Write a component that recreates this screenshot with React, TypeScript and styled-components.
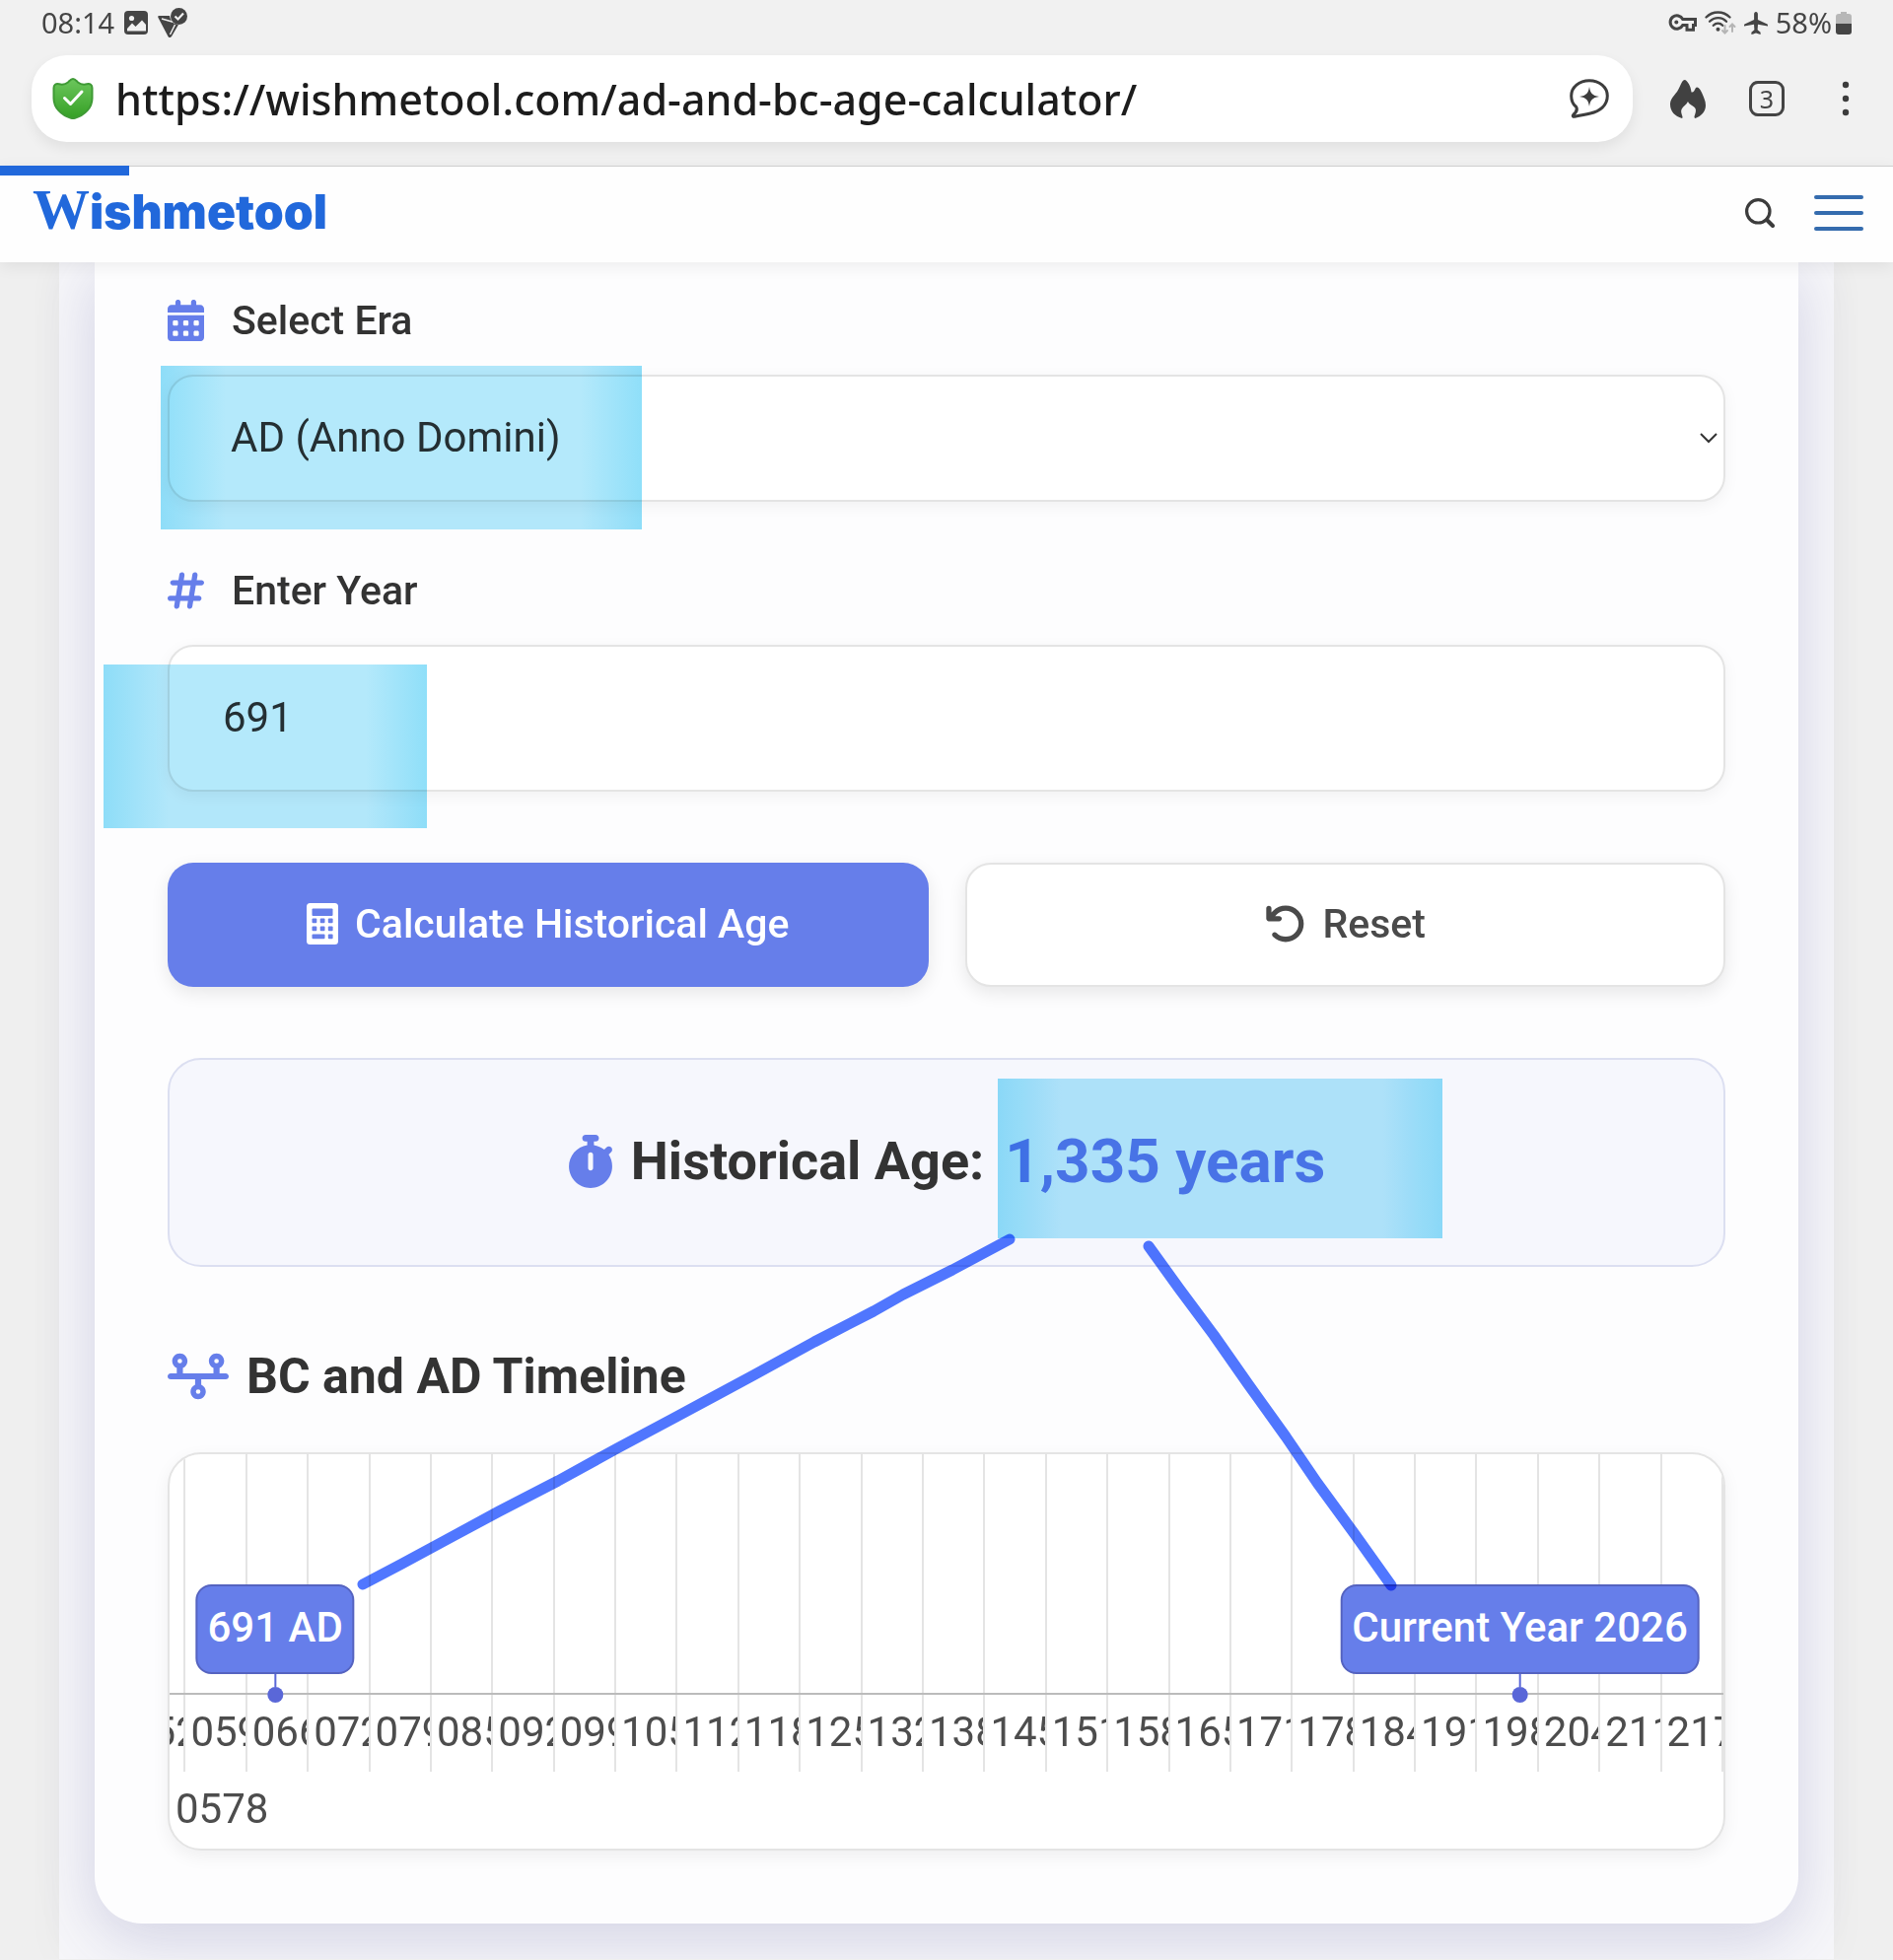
import React, { useState } from 'react';
import styled, { createGlobalStyle } from 'styled-components';
import {
  FaArrowRotateLeft,
  FaCalendarDays,
  FaHashtag,
  FaStopwatch,
  FaTimeline,
} from 'react-icons/fa6';

const GlobalStyle = createGlobalStyle`
  *, *::before, *::after { box-sizing: border-box; }
  body {
    margin: 0;
    background: #efefef;
    color: #333;
    font-family: Roboto, "Liberation Sans", sans-serif;
    font-size: 42px;
    line-height: 50px;
  }
  button, input, select { font: inherit; color: inherit; margin: 0; }
  h2, p { margin: 0; }
`;

const accent = '#667eea';
const accentDark = '#5a67d8';
const hairline = '#e4e4e4';

const Browser = styled.header`
  background: #f1f1f1;
  padding-bottom: 24px;
  font-family: "Noto Sans", sans-serif;
  color: #454545;
`;

const StatusBar = styled.div`
  display: flex;
  align-items: center;
  justify-content: space-between;
  height: 46px;
  padding: 0 42px;
  margin-bottom: 10px;
  font-size: 29px;
  line-height: 46px;
`;

const StatusGroup = styled.div<{ $gap: number }>`
  display: flex;
  align-items: center;
  gap: ${(p) => p.$gap}px;
`;

const Battery = styled.span`
  display: flex;
  align-items: center;
  gap: 4px;
`;

const Toolbar = styled.div`
  display: flex;
  align-items: center;
  gap: 44px;
  padding: 0 30px 0 32px;
`;

const AddressBar = styled.div`
  flex: 1;
  min-width: 0;
  display: flex;
  align-items: center;
  gap: 22px;
  height: 88px;
  margin-right: -6px;
  padding: 0 24px 0 21px;
  border-radius: 36px;
  background: #fff;
  box-shadow: 0 6px 14px rgba(0, 0, 0, 0.07);
`;

const AddressInput = styled.input`
  flex: 1;
  min-width: 0;
  height: 64px;
  padding: 0;
  border: 0;
  outline: 0;
  background: transparent;
  color: #1c1c1c;
  font-size: 43px;
  font-weight: 500;
`;

const IconButton = styled.button`
  display: inline-flex;
  align-items: center;
  justify-content: center;
  flex: none;
  padding: 0;
  border: 0;
  background: none;
  cursor: pointer;
`;

const TabCount = styled(IconButton)`
  width: 36px;
  height: 36px;
  border: 3px solid #444;
  border-radius: 9px;
  font-size: 25px;
  line-height: 30px;
`;

const SiteHeader = styled.div`
  position: relative;
  z-index: 2;
  display: flex;
  align-items: center;
  justify-content: space-between;
  height: 98px;
  padding: 0 30px 3px 33px;
  border-top: 1px solid #cfcfcf;
  background: #fefefe;
  box-shadow: 0 4px 16px rgba(0, 0, 0, 0.07);
`;

const ReadProgress = styled.div`
  position: absolute;
  top: -1px;
  left: 0;
  width: 131px;
  height: 10px;
  background: #2168db;
`;

const Logo = styled.a`
  display: flex;
  align-items: baseline;
  padding-bottom: 4px;
  color: #2168db;
  font-family: Inter, sans-serif;
  font-size: 48px;
  font-weight: 900;
  line-height: 50px;
  text-decoration: none;
`;

const LogoInitial = styled.span`
  font-family: "Liberation Serif", serif;
  font-size: 58px;
  font-weight: 700;
`;

const HeaderActions = styled.div`
  display: flex;
  align-items: center;
  gap: 40px;
`;

const Main = styled.main`
  margin: 0 60px;
  padding: 0 36px 36px;
  background: #f6f6f9;
  box-shadow: 0 0 40px rgba(0, 0, 0, 0.03);
`;

const Card = styled.form`
  position: relative;
  padding: 34px 74px 74px;
  border-radius: 0 0 48px 48px;
  background: #fdfdfe;
  box-shadow: 0 16px 60px rgba(70, 70, 150, 0.2);
`;

const Label = styled.label`
  display: grid;
  grid-template-columns: 65px 1fr;
  align-items: center;
  margin-bottom: 30px;
  font-size: 41px;
  font-weight: 500;

  svg {
    width: 37px;
    height: 42px;
    color: ${accent};
  }
`;

const Field = styled.div<{ $after: number }>`
  position: relative;
  margin-bottom: ${(p) => p.$after}px;
`;

const controlBox = `
  display: block;
  width: 100%;
  border: 2px solid ${hairline};
  border-radius: 26px;
  background: #fff;
  color: #333;
  outline: 0;
  box-shadow: 0 4px 16px rgba(0, 0, 0, 0.05);
`;

const Select = styled.select`
  ${controlBox}
  appearance: none;
  height: 129px;
  padding: 0 62px 2px;
`;

const YearInput = styled.input`
  ${controlBox}
  height: 149px;
  padding: 0 54px 2px;
`;

const Chevron = styled.svg`
  position: absolute;
  top: 58px;
  right: 8px;
  pointer-events: none;
`;

const Highlight = styled.span<{ $top: number; $left: number; $width: number; $height?: number }>`
  position: absolute;
  top: ${(p) => p.$top}px;
  left: ${(p) => p.$left}px;
  width: ${(p) => p.$width}px;
  height: ${(p) => p.$height ?? 166}px;
  background: linear-gradient(90deg, #8fdff9, #b4e9fb 66px, #b4e9fb calc(100% - 62px), #8fdff9);
  mix-blend-mode: multiply;
  pointer-events: none;
`;

const Actions = styled.div`
  display: grid;
  grid-template-columns: 1fr 1fr;
  gap: 37px;
  margin-bottom: 72px;
`;

const ActionButton = styled.button<{ $primary?: boolean }>`
  display: flex;
  align-items: center;
  justify-content: center;
  gap: 17px;
  height: 126px;
  padding: 0 6px 2px;
  border: ${(p) => (p.$primary ? '0' : `2px solid ${hairline}`)};
  border-radius: 26px;
  background: ${(p) => (p.$primary ? accent : '#fff')};
  color: ${(p) => (p.$primary ? '#fff' : '#4a4a4a')};
  font-size: 41px;
  font-weight: 500;
  box-shadow: 0 6px 18px rgba(0, 0, 0, 0.09);
  cursor: pointer;

  svg {
    width: ${(p) => (p.$primary ? 32 : 42)}px;
    height: 42px;
  }
`;

const Result = styled.div`
  display: flex;
  align-items: center;
  justify-content: center;
  gap: 18px;
  height: 212px;
  margin-bottom: 81px;
  padding-bottom: 2px;
  border: 2px solid #dcdff1;
  border-radius: 34px;
  background: #f6f7fd;
  font-size: 54px;
  font-weight: 700;

  > svg {
    width: 46px;
    height: 54px;
    color: ${accent};
  }
`;

const ResultValue = styled.output`
  position: relative;
  margin-left: 3px;
  color: ${accent};
  font-size: 62px;
`;

const SectionTitle = styled.h2`
  display: flex;
  align-items: center;
  gap: 18px;
  margin-bottom: 47px;
  font-size: 50px;
  font-weight: 700;
  line-height: 60px;

  svg {
    flex: none;
    width: 62px;
    height: 50px;
    color: ${accent};
  }
`;

const Timeline = styled.div`
  position: relative;
  overflow: hidden;
  border: 2px solid ${hairline};
  border-radius: 34px;
  background: #fff;
  color: #4d4d4d;
  box-shadow: 0 6px 18px rgba(0, 0, 0, 0.06);
`;

const Ticks = styled.div`
  display: grid;
  grid-template-columns: repeat(26, minmax(0, 1fr));
  height: 322px;
  margin-left: -46px;
`;

const Tick = styled.span`
  padding: 257px 0 0 5px;
  overflow: hidden;
  border-right: 2px solid ${hairline};
  white-space: nowrap;
`;

const Major = styled.p`
  padding: 13px 6px 15px;
`;

const Axis = styled.div`
  position: absolute;
  top: 242px;
  left: 0;
  right: 0;
  height: 2px;
  background: #bbb;
`;

const Pin = styled.div`
  position: absolute;
  top: 132px;
  display: flex;
  flex-direction: column;
  align-items: center;
  transform: translateX(-50%);
`;

const PinLabel = styled.span`
  padding: 17px 10px 20px;
  border: 2px solid #5563c0;
  border-radius: 16px;
  background: ${accent};
  color: #fff;
  font-weight: 500;
  white-space: nowrap;
`;

const PinStem = styled.span`
  width: 2px;
  height: 13px;
  background: ${accentDark};
`;

const PinDot = styled.span`
  width: 16px;
  height: 16px;
  border-radius: 50%;
  background: ${accentDark};
`;

const Strokes = styled.svg`
  position: absolute;
  inset: 0;
  width: 100%;
  height: 100%;
  mix-blend-mode: multiply;
  pointer-events: none;
`;

const years = Array.from({ length: 26 }, (_, i) => String(528 + i * 66).padStart(4, '0'));

const events = [
  { label: '691 AD', at: 6.8 },
  { label: 'Current Year 2026', at: 86.9 },
];

function PictureIcon() {
  return (
    <svg width="24" height="24" viewBox="0 0 24 24">
      <rect width="24" height="24" rx="4" fill="#454545" />
      <circle cx="7.500" cy="7.500" r="2.600" fill="#f1f1f1" />
      <path d="M3 18 8 12.500l3.500 3.500L18 9.500l4 4.500v6.500H3Z" fill="#f1f1f1" />
    </svg>
  );
}

function FunnelCheckIcon() {
  return (
    <svg width="30" height="30" viewBox="0 0 30 30">
      <path d="M1 8h11c1 6 4 8 9 9l-7 12c-1 1.500-3 1.500-3.500 0L.5 10C0 9 .2 8 1 8Z" fill="#454545" />
      <path d="M4 11l14 4M12.500 27l5-10" stroke="#f1f1f1" strokeWidth="1.500" />
      <circle cx="21.500" cy="8.500" r="8.500" fill="#454545" />
      <path d="m17.500 8.500 3 3 5.500-6" fill="none" stroke="#f1f1f1" strokeWidth="2.200" />
    </svg>
  );
}

function KeyIcon() {
  return (
    <svg width="29" height="18" viewBox="0 0 29 18" fill="none" stroke="#454545" strokeWidth="3">
      <path d="M14.800 5.500H27.500v6h-2v4.800h-6.500v-4.800h-4.200A6.700 6.700 0 1 1 14.800 5.500Z" />
      <circle cx="8.300" cy="8.500" r="2" fill="#454545" stroke="none" />
    </svg>
  );
}

function WifiIcon() {
  return (
    <svg width="32" height="24" viewBox="0 0 32 24" fill="none" strokeLinecap="round">
      <g stroke="#454545" strokeWidth="2.300">
        <path d="M1.500 6.500C8-.2 19-.2 25.500 6.500" />
        <path d="M5 10.800c5-5 12.500-5 17 0" />
        <path d="M8.800 14.800c2.700-2.800 6.700-2.800 9.400 0" />
      </g>
      <circle cx="13.500" cy="18.800" r="2" fill="#454545" />
      <path d="M20.500 15v7.500m-2.500-2.500 2.500 2.500 2.500-2.500M28 21v-7.500m-2.500 2.500 2.500-2.500 2.500 2.500" stroke="#b5b5b5" strokeWidth="2" />
    </svg>
  );
}

function PlaneIcon() {
  return (
    <svg width="24" height="23" viewBox="0 0 24 23" fill="#454545">
      <path d="M12 0c1.300 0 1.900 1 1.900 2.300v5.800l9.600 4.400c.5.300.5 1 .5 2l-10-1.700-.4 5.400 3 2.600V23l-4.600-1.400L7.400 23v-2.200l3-2.600-.4-5.400-10 1.700c0-1 0-1.700.5-2l9.600-4.400V2.300C10.100 1 10.700 0 12 0Z" />
    </svg>
  );
}

function BatteryIcon() {
  return (
    <svg width="16" height="23" viewBox="0 0 16 23">
      <path d="M5 0h6v2h2a3 3 0 0 1 3 3v7H0V5a3 3 0 0 1 3-3h2Z" fill="#b7b7b7" />
      <path d="M0 12h16v8a3 3 0 0 1-3 3H3a3 3 0 0 1-3-3Z" fill="#454545" />
    </svg>
  );
}

function ShieldIcon() {
  return (
    <svg width="42" height="42" viewBox="0 0 42 42">
      <defs>
        <linearGradient id="shield" x1="0" y1="0" x2="0" y2="1">
          <stop offset="0" stopColor="#6cc65c" />
          <stop offset="1" stopColor="#35a025" />
        </linearGradient>
      </defs>
      <path
        d="M21 1c2 0 3.500 2 5 3.400 3 2.500 6 2.600 9 1.900 3.500-.8 5.500.8 5.500 4v10.400C40.500 30 33 38 23 40.700q-2 .5-4 0C9 38 1.500 30 1.500 20.700V10.300c0-3.200 2-4.800 5.500-4 3 .7 6 .6 9-1.900C17.500 3 19 1 21 1Z"
        fill="url(#shield)"
        stroke="#3f9a35"
        strokeWidth="2"
      />
      <path d="m12.500 20.500 6 6L30 14" fill="none" stroke="#fff" strokeWidth="3" strokeLinecap="round" strokeLinejoin="round" />
    </svg>
  );
}

function ChatSparkleIcon() {
  return (
    <svg width="40" height="40" viewBox="0 0 40 40">
      <path
        d="M20 1.700c10.200 0 18.300 6.500 18.300 15.500 0 10-8 15.800-17.300 17.800-6 1.300-12 2.500-16 3.300-1.500.3-2.200-.8-1.200-1.900 2.500-2.600 4.700-4.500 2.900-7.900C3.500 26 1.700 22.500 1.700 17.200 1.700 8.200 9.800 1.700 20 1.700Z"
        fill="none"
        stroke="#3d3d3d"
        strokeWidth="3"
      />
      <path d="M20 8c1 6.500 3 9 10 10-7 1-9 3.500-10 10-1-6.500-3-9-10-10 7-1 9-3.500 10-10Z" fill="#3d3d3d" />
    </svg>
  );
}

function FlameIcon() {
  return (
    <svg width="36" height="39" viewBox="0 0 36 39" fill="#414141">
      <path d="M15 0c2.500 1 6 6 6.500 12.500 2.500.5 3-2 4.500-4.500 2-2 5 2 6.500 6 1.500 4 3.500 7 3.500 12 0 6-4.500 11-10.500 13-3-1 2-6 0-10-1.500-3-6-3.500-7.500-7-1.500 3.500-5 4.500-6.500 8-1.500 4 2.500 8 .5 9C5 37 0 32 0 25c0-5 3-8 7-13 4-6 4.500-12 8-12Z" />
    </svg>
  );
}

function DotsIcon() {
  return (
    <svg width="36" height="36" viewBox="0 0 36 36" fill="#3c3c3c">
      <circle cx="18" cy="4" r="3.200" />
      <circle cx="18" cy="18" r="3.200" />
      <circle cx="18" cy="32" r="3.200" />
    </svg>
  );
}

function SearchIcon() {
  return (
    <svg width="30" height="30" viewBox="0 0 30 30" fill="none" stroke="#3c3c3c" strokeWidth="3.200" strokeLinecap="round">
      <circle cx="13.300" cy="13.300" r="11.700" />
      <path d="m22 22 6 6" strokeWidth="4" />
    </svg>
  );
}

function MenuIcon() {
  return (
    <svg width="50" height="36" viewBox="0 0 50 36" fill="#356cae">
      <rect width="50" height="4" rx="2" />
      <rect y="16" width="50" height="4" rx="2" />
      <rect y="32" width="50" height="4" rx="2" />
    </svg>
  );
}

function CalculatorIcon() {
  return (
    <svg viewBox="0 0 32 42">
      <rect width="32" height="42" rx="3.500" fill="#fff" />
      <g fill={accent}>
        <rect x="5.500" y="5.500" width="21" height="7.500" rx="1" />
        {[15.5, 23.5].map((y) =>
          [5.5, 13.7, 21.8].map((x) => <rect key={`${x}-${y}`} x={x} y={y} width="4.800" height="4.800" rx="1" />),
        )}
        <rect x="5.500" y="31.500" width="13" height="4.800" rx="1" />
        <rect x="21.800" y="31.500" width="4.800" height="4.800" rx="1" />
      </g>
    </svg>
  );
}

export default function App() {
  const [era, setEra] = useState('ad');
  const [year, setYear] = useState('691');

  return (
    <>
      <GlobalStyle />
      <Browser>
        <StatusBar>
          <StatusGroup $gap={10}>
            <span>08:14</span>
            <PictureIcon />
            <FunnelCheckIcon />
          </StatusGroup>
          <StatusGroup $gap={8}>
            <KeyIcon />
            <WifiIcon />
            <PlaneIcon />
            <Battery>
              58%
              <BatteryIcon />
            </Battery>
          </StatusGroup>
        </StatusBar>
        <Toolbar>
          <AddressBar>
            <ShieldIcon />
            <AddressInput
              aria-label="Address"
              type="text"
              defaultValue="https://wishmetool.com/ad-and-bc-age-calculator/"
            />
            <IconButton type="button" aria-label="Assistant">
              <ChatSparkleIcon />
            </IconButton>
          </AddressBar>
          <IconButton type="button" aria-label="Clear data">
            <FlameIcon />
          </IconButton>
          <TabCount type="button">3</TabCount>
          <IconButton type="button" aria-label="More">
            <DotsIcon />
          </IconButton>
        </Toolbar>
      </Browser>

      <SiteHeader>
        <ReadProgress />
        <Logo href="#">
          <LogoInitial>W</LogoInitial>ishmetool
        </Logo>
        <HeaderActions>
          <IconButton type="button" aria-label="Search">
            <SearchIcon />
          </IconButton>
          <IconButton type="button" aria-label="Menu">
            <MenuIcon />
          </IconButton>
        </HeaderActions>
      </SiteHeader>

      <Main>
        <Card onSubmit={(e) => e.preventDefault()}>
          <Label htmlFor="era">
            <FaCalendarDays preserveAspectRatio="xMidYMid slice" />
            Select Era
          </Label>
          <Field $after={65}>
            <Select id="era" value={era} onChange={(e) => setEra(e.target.value)}>
              <option value="ad">AD (Anno Domini)</option>
              <option value="bc">BC (Before Christ)</option>
            </Select>
            <Chevron width="18" height="12" viewBox="0 0 18 12" fill="none" stroke="#333" strokeWidth="2">
              <path d="m1 2 8 8 8-8" />
            </Chevron>
            <Highlight $top={-9} $left={-7} $width={488} />
          </Field>

          <Label htmlFor="year">
            <FaHashtag preserveAspectRatio="xMidYMid slice" />
            Enter Year
          </Label>
          <Field $after={72}>
            <YearInput
              id="year"
              type="text"
              inputMode="numeric"
              value={year}
              onChange={(e) => setYear(e.target.value)}
            />
            <Highlight $top={20} $left={-65} $width={328} />
          </Field>

          <Actions>
            <ActionButton type="submit" $primary>
              <CalculatorIcon />
              Calculate Historical Age
            </ActionButton>
            <ActionButton type="button" onClick={() => setYear('')}>
              <FaArrowRotateLeft />
              Reset
            </ActionButton>
          </Actions>

          <Result>
            <FaStopwatch preserveAspectRatio="xMidYMid slice" />
            <span>Historical Age:</span>
            <ResultValue>
              1,335 years
              <Highlight $top={-59} $left={-7} $width={451} $height={162} />
            </ResultValue>
          </Result>

          <SectionTitle>
            <FaTimeline />
            BC and AD Timeline
          </SectionTitle>
          <Timeline>
            <Ticks>
              {years.map((y) => (
                <Tick key={y}>{y}</Tick>
              ))}
            </Ticks>
            <Major>0578</Major>
            <Axis />
            {events.map((e) => (
              <Pin key={e.label} style={{ left: `${e.at}%` }}>
                <PinLabel>{e.label}</PinLabel>
                <PinStem />
                <PinDot />
              </Pin>
            ))}
          </Timeline>

          <Strokes viewBox="0 0 1728 1685" preserveAspectRatio="none" fill="none" stroke="#5077ff" strokeWidth="11" strokeLinecap="round" strokeLinejoin="round">
            <path d="M928 991 870 1022 820 1047 790 1064 730 1095 668 1129 590 1171 530 1203 470 1236 410 1267 360 1294 310 1321 272 1341" />
            <path d="M1069 998 1100 1041 1135 1088 1170 1138 1208 1191 1240 1238 1278 1290 1315 1342" />
          </Strokes>
        </Card>
      </Main>
    </>
  );
}
